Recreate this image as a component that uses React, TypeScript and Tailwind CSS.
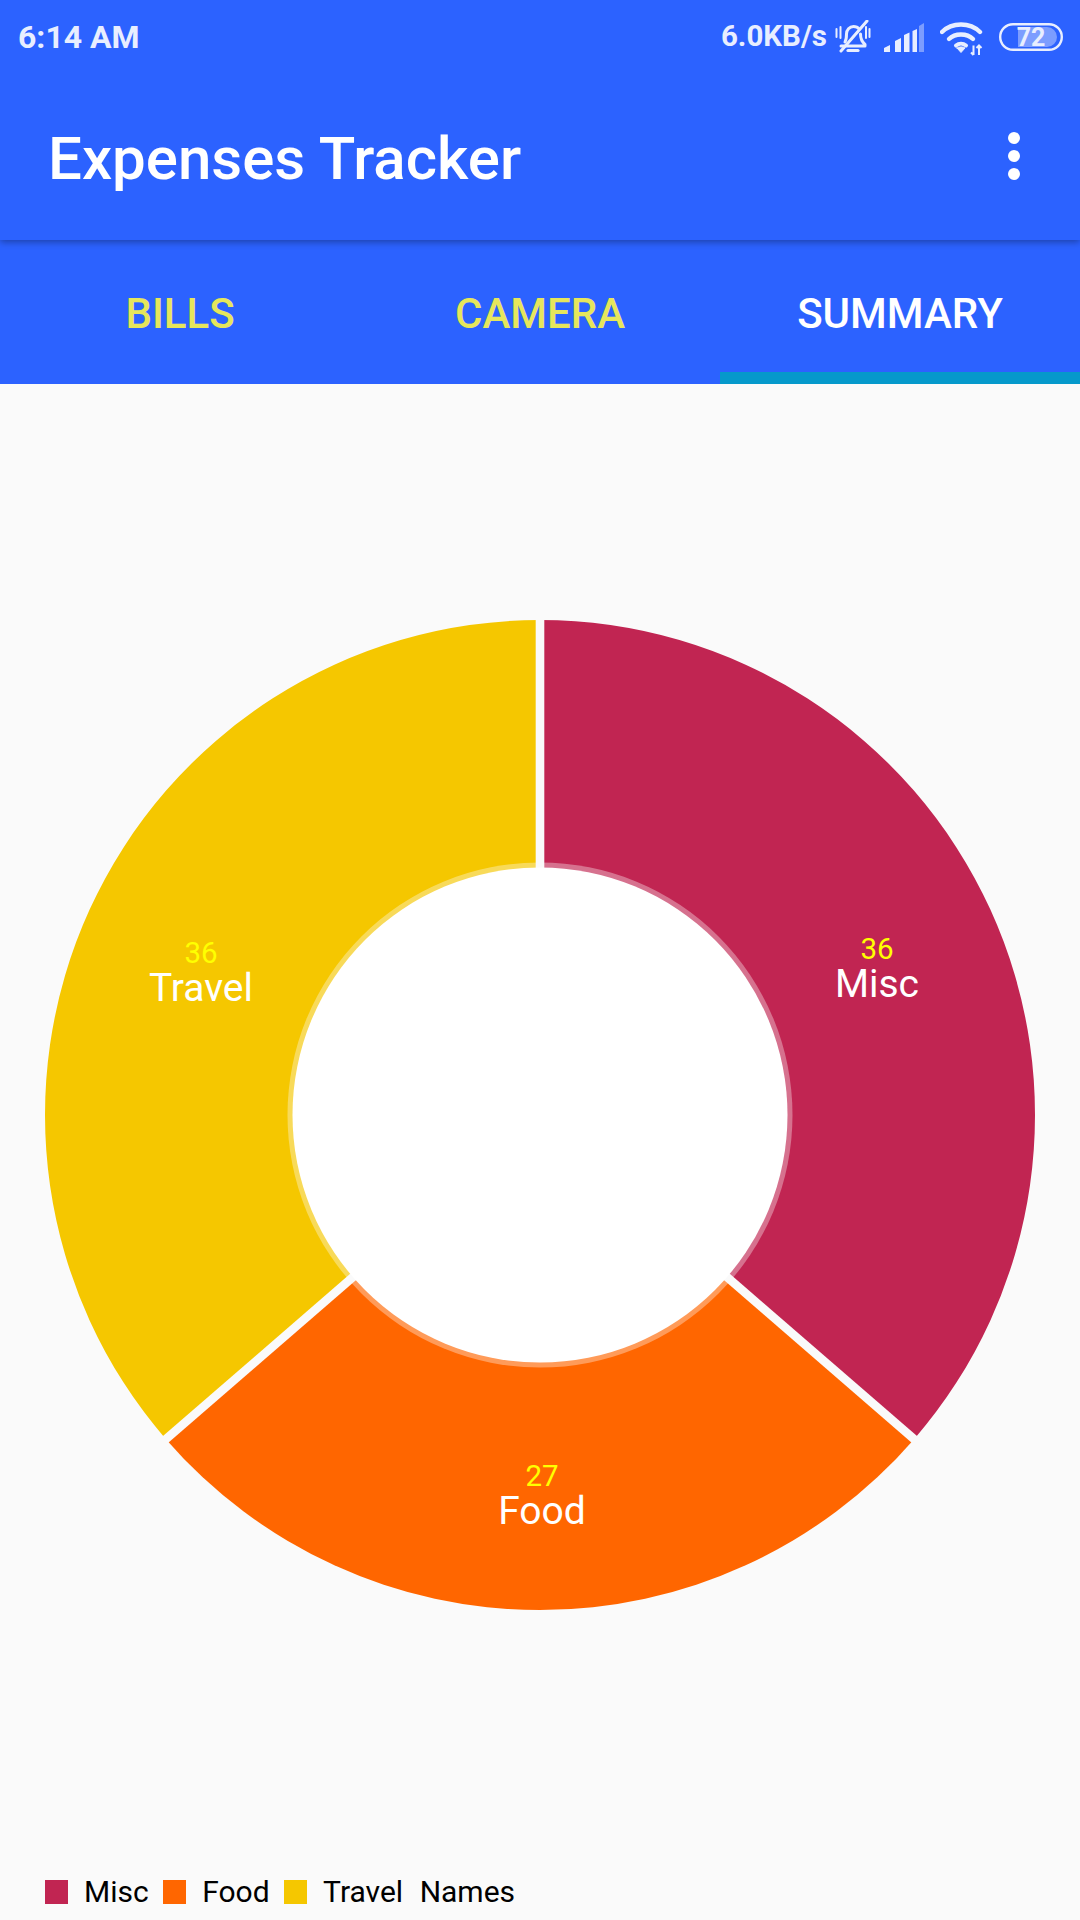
import React from "react";

const CX = 540;
const CY = 1115;
const R = 495;

function pt(r: number, deg: number): [number, number] {
  const a = ((deg - 90) * Math.PI) / 180;
  return [CX + r * Math.cos(a), CY + r * Math.sin(a)];
}

function wedge(r: number, from: number, to: number): string {
  const [x1, y1] = pt(r, from);
  const [x2, y2] = pt(r, to);
  const large = to - from > 180 ? 1 : 0;
  return `M${CX} ${CY}L${x1} ${y1}A${r} ${r} 0 ${large} 1 ${x2} ${y2}Z`;
}

const A1 = (36 / 99) * 360;
const A2 = A1 + (27 / 99) * 360;

function Donut() {
  const gaps = [0, A1, A2];
  return (
    <svg viewBox="0 384 1080 1462" className="block w-[1080px] h-[1462px]">
      <path d={wedge(R, 0, A1)} fill="#c12552" />
      <path d={wedge(R, A1, A2)} fill="#ff6600" />
      <path d={wedge(R, A2, 360)} fill="#f5c700" />
      <circle cx={CX} cy={CY} r={252.5} fill="#ffffff" fillOpacity={0.35} />
      {gaps.map((g) => {
        const [x, y] = pt(R + 4, g);
        return <line key={g} x1={CX} y1={CY} x2={x} y2={y} stroke="#fafafa" strokeWidth={8.6} />;
      })}
      <circle cx={CX} cy={CY} r={247.5} fill="#ffffff" />
      <g fontFamily="Roboto, sans-serif" textAnchor="middle">
        <text x={877} y={959} fontSize={29.5} fill="#ffff00">36</text>
        <text x={877} y={997} fontSize={39} fill="#ffffff">Misc</text>
        <text x={542} y={1486} fontSize={29.5} fill="#ffff00">27</text>
        <text x={542} y={1524} fontSize={39} fill="#ffffff">Food</text>
        <text x={201} y={963} fontSize={29.5} fill="#ffff00">36</text>
        <text x={201} y={1001} fontSize={39} fill="#ffffff">Travel</text>
      </g>
    </svg>
  );
}

function BellOff() {
  return (
    <svg viewBox="0 0 36 34" className="w-[36px] h-[34px]" fill="none" stroke="#e8eeff" strokeWidth={3} strokeLinecap="round" strokeLinejoin="round">
      <path d="M10 22c1.500-2.500 1.500-5 1.500-8 0-4 3-7.500 7-7.500 2.500 0 4.500 1 5.800 2.600" />
      <path d="M25.500 14c0 3.500.5 7 4.500 10.500V26H6" />
      <path d="M13 30.500h10" strokeWidth={3.200} />
      <path d="M32 1 6 31" />
      <path d="M1.500 9v8M5.500 7v11M31 7v11M34.500 9v8" strokeWidth={2} />
    </svg>
  );
}

function Signal() {
  return (
    <svg viewBox="0 0 40 29" className="w-[40px] h-[29px]">
      <path d="M0 29v-4l6-3v7z" fill="#e8eeff" />
      <path d="M11 29V18l6-3v14z" fill="#e8eeff" />
      <path d="M20 29V12l5.500-2.500V29z" fill="#e8eeff" />
      <path d="M28.500 29V8L33 6v23z" fill="#e8eeff" />
      <path d="M35 29V3l5-3v29z" fill="#7c9dff" />
    </svg>
  );
}

function Wifi() {
  return (
    <svg viewBox="0 0 44 36" className="w-[44px] h-[36px]" fill="none" stroke="#e8eeff" strokeLinecap="round">
      <path d="M2 11C12 1 30 1 40 11" strokeWidth={4.4} />
      <path d="M9 18C15 12 27 12 33 18" strokeWidth={4.4} />
      <path d="M16 24.500C19 22 23 22 26 24.500" strokeWidth={4} />
      <path d="M17 27 21 31.500 25 27C23 25.500 19 25.500 17 27Z" fill="#e8eeff" strokeWidth={1} />
      <path d="M33.500 24.500V34M31 31.500l2.500 2.500M39 34V24.500M36.500 27l2.500-2.500 2.500 2.500" strokeWidth={2} strokeLinecap="butt" />
    </svg>
  );
}

function Battery() {
  return (
    <svg viewBox="0 0 64 28" className="w-[64px] h-[28px]">
      <path d="M19 4h29a10 10 0 0 1 0 20H19z" fill="#7c9dff" />
      <rect x="1.200" y="1.200" width="61.600" height="25.600" rx="12.800" fill="none" stroke="#e8eeff" strokeWidth={2.4} />
      <text x="32" y="23" textAnchor="middle" fontSize="25" fontWeight="700" fontFamily="Roboto, sans-serif" fill="#e8eeff">72</text>
    </svg>
  );
}

function StatusBar() {
  return (
    <div className="flex h-[74px] items-center justify-between pl-[18px] pr-[17px] text-[#e8eeff]">
      <span className="text-[32px] font-bold leading-none">6:14 AM</span>
      <div className="flex items-center">
        <span className="text-[29.500px] font-bold leading-none mr-[8px]">6.0KB/s</span>
        <BellOff />
        <div className="ml-[13px]"><Signal /></div>
        <div className="ml-[16px] mt-[3px]"><Wifi /></div>
        <div className="ml-[15px]"><Battery /></div>
      </div>
    </div>
  );
}

function Tab({ label, active }: { label: string; active?: boolean }) {
  return (
    <div className={`relative flex flex-1 items-center justify-center pt-[4px] text-[42px] font-medium leading-none ${active ? "text-white" : "text-[#e6e65c]"}`}>
      {label}
      {active && <div className="absolute bottom-0 left-0 right-0 h-[12px] bg-[#0599cb]" />}
    </div>
  );
}

function LegendItem({ color, label }: { color: string; label: string }) {
  return (
    <div className="flex items-center mr-[14.500px]">
      <div className="w-[23px] h-[24px]" style={{ backgroundColor: color }} />
      <span className="ml-[16px]">{label}</span>
    </div>
  );
}

export default function App() {
  return (
    <div className="flex flex-col w-[1080px] h-[1920px] overflow-hidden bg-[#fafafa] font-['Roboto',sans-serif]">
      <div className="relative z-10 h-[240px] shrink-0 bg-[#2c62ff] shadow-[0_2px_7px_rgba(0,0,0,0.35)]">
        <StatusBar />
        <div className="flex h-[166px] items-center justify-between pl-[48px] pr-[60px] pt-[4px]">
          <span className="text-[60px] font-medium leading-none text-white">Expenses Tracker</span>
          <div className="flex flex-col gap-[6px] mb-[6px]">
            <div className="w-[12px] h-[12px] rounded-full bg-white" />
            <div className="w-[12px] h-[12px] rounded-full bg-white" />
            <div className="w-[12px] h-[12px] rounded-full bg-white" />
          </div>
        </div>
      </div>
      <div className="flex h-[144px] shrink-0 bg-[#2c62ff]">
        <Tab label="BILLS" />
        <Tab label="CAMERA" />
        <Tab label="SUMMARY" active />
      </div>
      <Donut />
      <div className="flex items-center pl-[45px] pt-[30px] text-[30px] leading-[32px] text-black">
        <LegendItem color="#c12552" label="Misc" />
        <LegendItem color="#ff6600" label="Food" />
        <LegendItem color="#f5c700" label="Travel" />
        <span className="ml-[2px]">Names</span>
      </div>
    </div>
  );
}
